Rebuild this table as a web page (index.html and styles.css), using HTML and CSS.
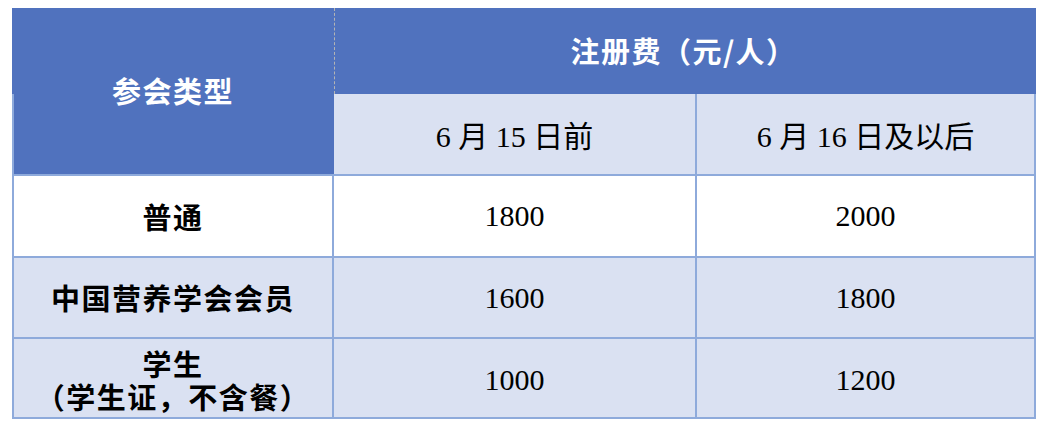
FILE: index.html
```html
<!DOCTYPE html>
<html lang="zh-CN">
<head>
<meta charset="utf-8">
<title>注册费</title>
<link rel="stylesheet" href="styles.css">
</head>
<body>
<div class="fee-table">
  <div class="cell type head">参会类型</div>
  <div class="cell fee head">注册费（元/人）</div>
  <div class="cell date d1">6 月 15 日前</div>
  <div class="cell date d2">6 月 16 日及以后</div>

  <div class="cell label first white">普通</div>
  <div class="cell num white">1800</div>
  <div class="cell num white">2000</div>

  <div class="cell label first">中国营养学会会员</div>
  <div class="cell num">1600</div>
  <div class="cell num">1800</div>

  <div class="cell label first last"><span class="line">学生</span><span class="line">（学生证，不含餐）</span></div>
  <div class="cell num last">1000</div>
  <div class="cell num last">1200</div>
</div>
</body>
</html>
```

FILE: styles.css
```css
html, body {
  margin: 0;
  padding: 0;
  background: #ffffff;
}

body {
  padding: 8px 0 0 12px;
}

.fee-table {
  display: grid;
  width: 1024px;
  grid-template-columns: 322px 363px 339px;
  grid-template-rows: 86px 82px 82px 81px 80px;
  font-family: "Liberation Serif", "Noto Sans CJK SC", serif;
  font-size: 30px;
  color: #000;
}

.cell {
  box-sizing: border-box;
  display: flex;
  align-items: center;
  justify-content: center;
  text-align: center;
  background: #dae1f2;
  border-right: 2px solid #8eaadb;
  border-bottom: 2px solid #8eaadb;
}

.head {
  background: #5072be;
  color: #ffffff;
  font-family: "Noto Sans CJK SC", sans-serif;
  font-weight: 700;
  font-size: 29px;
  letter-spacing: 1.5px;
}

.type {
  grid-row: 1 / span 2;
  grid-column: 1;
  border-right: none;
  padding-bottom: 2px;
  background: linear-gradient(#8eaadb, #8eaadb) left bottom / 2px calc(100% - 86px) no-repeat, #5072be;
}

.fee {
  grid-row: 1;
  grid-column: 2 / span 2;
  border-right: none;
  border-bottom: none;
  border-left: 1px dashed #b4b4b4;
  padding-right: 4px;
  padding-bottom: 3px;
}

.date {
  font-family: "Liberation Serif", "Noto Sans CJK SC", serif;
  font-weight: 400;
}

.white {
  background: #ffffff;
}

.label {
  font-family: "Noto Sans CJK SC", sans-serif;
  font-weight: 700;
  font-size: 29px;
  letter-spacing: 1.5px;
  flex-direction: column;
  line-height: 33px;
}

.line {
  display: block;
}

.first {
  border-left: 2px solid #8eaadb;
}

.last {
  padding-top: 4px;
}
```
